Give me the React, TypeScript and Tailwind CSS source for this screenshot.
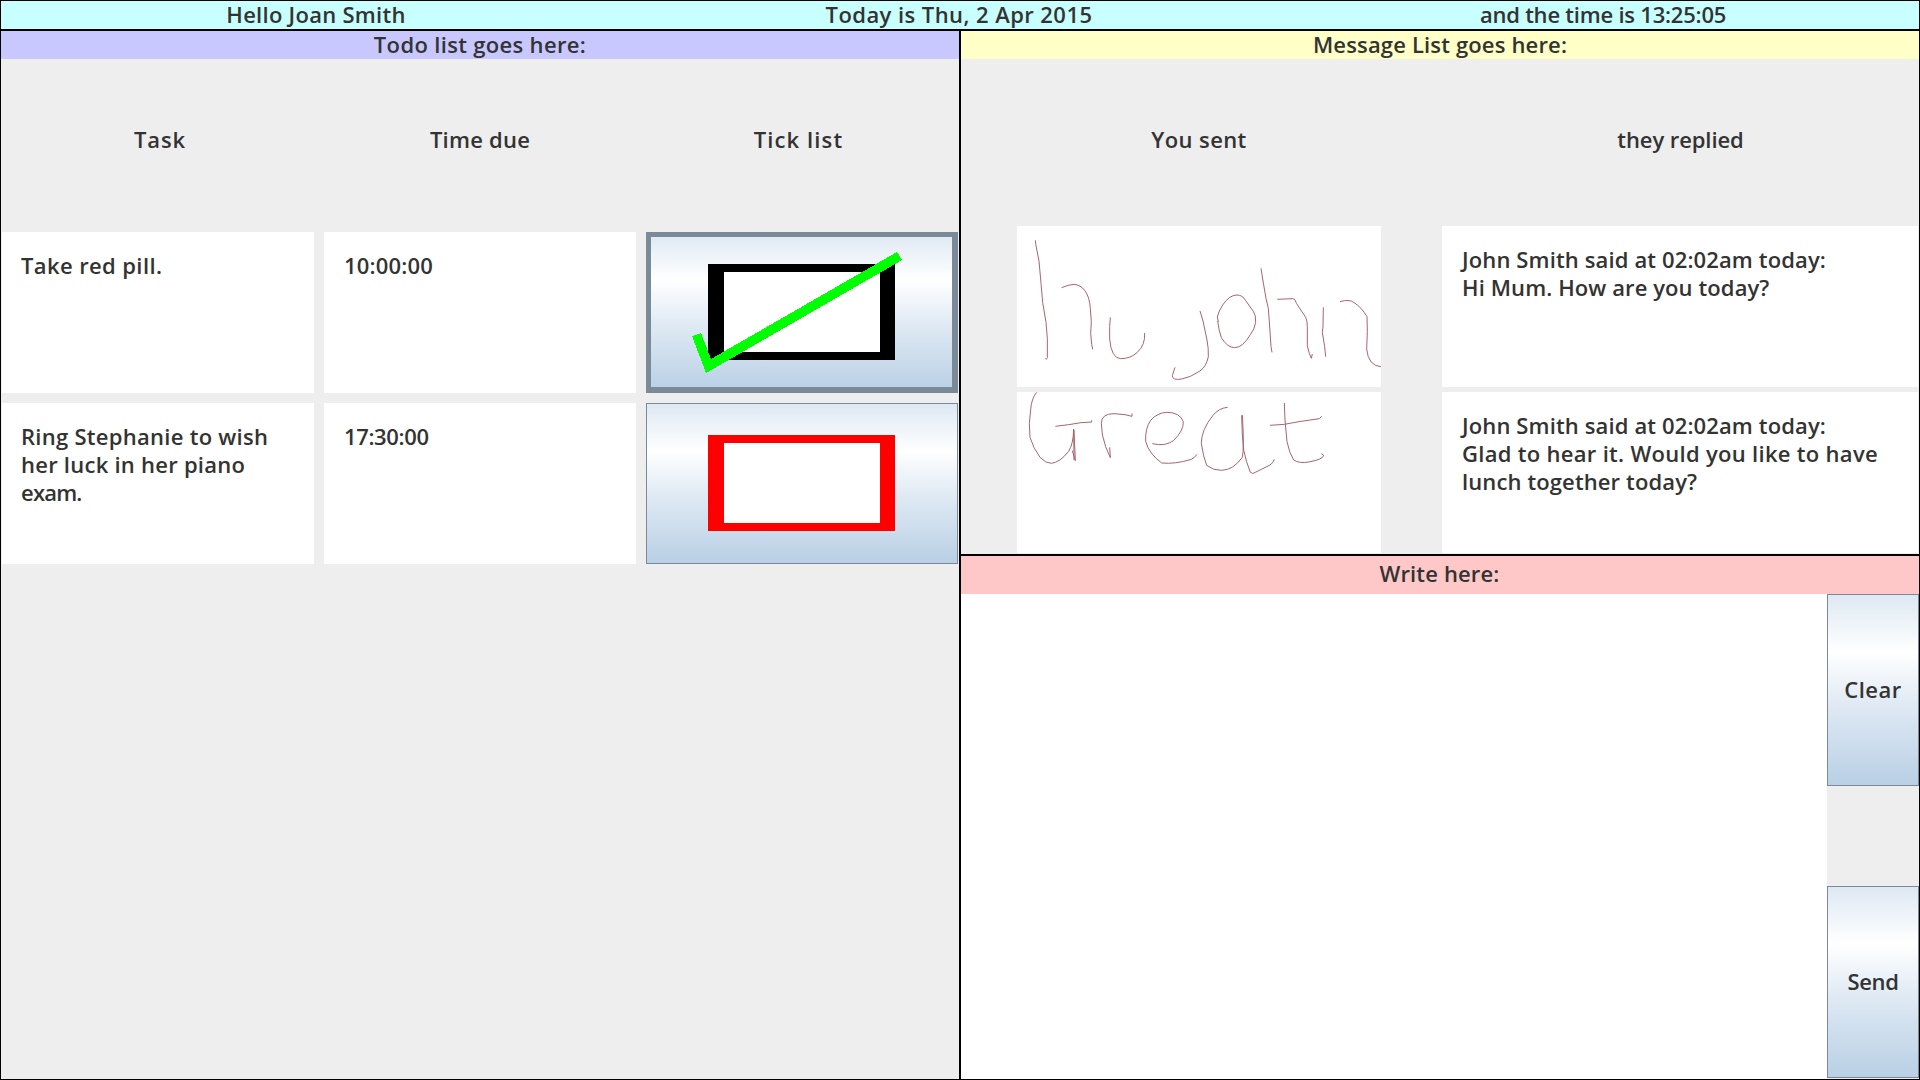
import React from 'react';

const GRADIENT =
  'bg-[linear-gradient(to_bottom,#dde8f3_0%,#ffffff_30%,#dde8f3_60%,#b8cfe5_100%)] bg-origin-border';

type Todo = { lines: { text: string; tracking: string }[]; due: string; dueTracking: string; done: boolean };

const TODOS: Todo[] = [
  {
    lines: [{ text: 'Take red pill.', tracking: 'tracking-[0.39px]' }],
    due: '10:00:00',
    dueTracking: 'tracking-[0.2px]',
    done: true,
  },
  {
    lines: [
      { text: 'Ring Stephanie to wish', tracking: 'tracking-[0.28px]' },
      { text: 'her luck in her piano', tracking: 'tracking-[0.25px]' },
      { text: 'exam.', tracking: 'tracking-[-0.8px]' },
    ],
    due: '17:30:00',
    dueTracking: 'tracking-[-0.36px]',
    done: false,
  },
];

const HI_JOHN = [
  'M106 76 L108 92 L117 138 L123 205 L128 262 L138 322 L142 370 L142 428 L139 433 L136 430',
  'M185 218 Q205 209 222 208 Q242 210 254 226 Q269 246 271 280 L274 320 L272 355 L275 388 L278 403',
  'M331 307 L329 335 L329 372 Q334 430 362 431 Q392 431 412 412 Q436 390 434 354',
  'M600 288 L609 318 L621 375 Q626 400 625 425 Q619 455 600 468 Q570 488 545 492 Q517 497 517 482 L525 457',
  'M655 320 L652 306 Q656 288 668 270 Q688 240 711 240 Q728 240 737 257 L760 289 Q768 300 767 322 Q764 343 751 359 Q728 398 704 398 Q682 398 664 368 Q656 345 653 318',
  'M783 160 L789 198 L798 250 L805 280 L810 350 L813 395 L816 412',
  'M832 253 L878 251 L884 253 L890 266 L917 307 Q922 317 922 335 L922 392 Q928 420 934 430 L937 417',
  'M970 277 L969 335 L967 352 L974 395 L977 425',
  'M1020 260 Q1048 252 1061 262 Q1085 277 1101 305 L1102 350 L1100 402 Q1105 453 1143 455',
];

const GREAT = [
  'M110 37 Q94 56 92 90 L88 130 L90 172 Q100 205 120 232 Q137 250 154 250 Q180 247 206 214 Q220 192 221 147 L222 240',
  'M217 212 L226 242 L222 150',
  'M166 139 L206 134 L243 128 L275 126 L275 121',
  'M396 100 L396 109 L375 104 L342 101 Q304 101 304 130 Q304 165 317 200 L331 233 L329 202',
  'M457 191 Q497 200 520 182 Q551 153 550 125 Q540 97 500 97 Q472 98 452 121 Q435 145 437 184 Q446 220 485 249 Q525 253 574 238 Q583 234 591 223',
  'M683 82 Q657 84 639 106 Q604 149 604 190 Q610 232 620 256 Q640 272 665 271 Q700 270 727 232 Q733 205 727 105',
  'M725 106 L727 165 L731 210 Q738 245 751 277 Q759 284 766 277 L810 255 Q820 249 823 238',
  'M853 69 L855 120 L861 185 Q868 220 881 240 Q898 251 926 246 Q970 238 971 226 L964 221',
  'M810 136 L853 133 L897 125 L958 116 L965 109',
];

function Ink({ strokes, viewBox }: { strokes: string[]; viewBox: string }) {
  return (
    <div className="h-[161px] w-[364px] bg-white">
      <svg
        viewBox={viewBox}
        className="block h-full w-full"
        fill="none"
        stroke="#a8646e"
        strokeWidth="3"
        strokeLinejoin="round"
      >
        {strokes.map((d) => (
          <path key={d} d={d} />
        ))}
      </svg>
    </div>
  );
}

function TickButton({ done }: { done: boolean }) {
  return (
    <button
      className={`relative h-[161px] w-[312px] border-[#7a8a99] ${GRADIENT} ${
        done ? 'border-t-[5px] border-r-[6px] border-b-[6px] border-l-[5px]' : 'border'
      }`}
    >
      <svg
        viewBox="0 0 312 161"
        className={`absolute h-[161px] w-[312px] ${done ? '-top-[5px] -left-[5px]' : '-top-px -left-px'}`}
        shapeRendering="crispEdges"
      >
        <rect x="62" y="32" width="187" height="96" fill={done ? '#000000' : '#ff0000'} />
        <rect x="78" y="40" width="156" height="80" fill="#ffffff" />
        {done && <path d="M46 104 L55 101 L65 127 L251 20 L256 28 L60 141 Z" fill="#00ff00" />}
      </svg>
    </button>
  );
}

function ColumnTitle({ className, children }: { className: string; children: React.ReactNode }) {
  return <div className={`flex h-[161px] items-center justify-center ${className}`}>{children}</div>;
}

function ReplyCard({ children }: { children: React.ReactNode }) {
  return <div className="h-[161px] w-[476px] bg-white px-[20px] pt-[19px] whitespace-nowrap">{children}</div>;
}

export default function App() {
  return (
    <div className="flex h-[1080px] w-[1920px] flex-col overflow-hidden border border-black bg-[#eeeeee] font-['Open_Sans',sans-serif] text-[22px] leading-[28px] font-semibold text-[#333333]">
      <header className="grid h-[28px] shrink-0 grid-cols-[630px_656px_632px] bg-[#c8ffff] text-center leading-[26px]">
        <div className="tracking-[0.27px]">Hello Joan Smith</div>
        <div className="tracking-[0.43px]">Today is Thu, 2 Apr 2015</div>
        <div className="tracking-[-0.22px]">and the time is 13:25:05</div>
      </header>

      <main className="flex min-h-0 flex-1 border-t-2 border-black">
        <section className="w-[958px] shrink-0">
          <h2 className="h-[28px] bg-[#c8c8ff] text-center leading-[26px] tracking-[0.33px]">Todo list goes here:</h2>
          <div className="grid grid-cols-[312px_312px_312px] gap-[10px] pt-[2px] pl-px">
            <ColumnTitle className="pb-[5px] pl-[4px] tracking-[0.83px]">Task</ColumnTitle>
            <ColumnTitle className="pb-[5px] tracking-[0.24px]">Time due</ColumnTitle>
            <ColumnTitle className="pr-[7px] pb-[5px] tracking-[1.1px]">Tick list</ColumnTitle>
            {TODOS.map((todo) => (
              <React.Fragment key={todo.due}>
                <div className="h-[161px] bg-white px-[19px] pt-[19px] whitespace-nowrap">
                  {todo.lines.map((line) => (
                    <div key={line.text} className={line.tracking}>
                      {line.text}
                    </div>
                  ))}
                </div>
                <div className={`h-[161px] bg-white px-[20px] pt-[19px] ${todo.dueTracking}`}>{todo.due}</div>
                <TickButton done={todo.done} />
              </React.Fragment>
            ))}
          </div>
        </section>

        <section className="flex flex-1 flex-col border-l-2 border-black">
          <h2 className="h-[28px] shrink-0 bg-[#ffffc8] text-center leading-[26px] tracking-[0.16px]">
            Message List goes here:
          </h2>
          <div className="grid h-[495px] shrink-0 grid-cols-[364px_476px] content-start gap-x-[61px] gap-y-[5px] pt-px pl-[56px]">
            <ColumnTitle className="pb-[4px] tracking-[0.4px]">You sent</ColumnTitle>
            <ColumnTitle className="pb-[4px] pl-px tracking-[-0.08px]">they replied</ColumnTitle>
            <Ink strokes={HI_JOHN} viewBox="51 33 1092 483" />
            <ReplyCard>
              <div className="tracking-[0.13px]">John Smith said at 02:02am today:</div>
              <div className="tracking-[0.1px]">Hi Mum. How are you today?</div>
            </ReplyCard>
            <Ink strokes={GREAT} viewBox="51 36 1092 483" />
            <ReplyCard>
              <div className="tracking-[0.13px]">John Smith said at 02:02am today:</div>
              <div className="tracking-[0.3px]">Glad to hear it. Would you like to have</div>
              <div className="tracking-[0.12px]">lunch together today?</div>
            </ReplyCard>
          </div>

          <h2 className="h-[40px] shrink-0 border-t-2 border-black bg-[#ffc8c8] pr-px text-center leading-[35px] tracking-[0.16px]">
            Write here:
          </h2>
          <div className="flex min-h-0 flex-1">
            <div className="w-[866px] bg-white" />
            <div className="flex w-[92px] flex-col justify-between pb-px">
              <button className={`h-[192px] border border-[#7a8a99] pb-[2px] tracking-[0.5px] ${GRADIENT}`}>Clear</button>
              <button className={`h-[192px] border border-[#7a8a99] pb-[2px] tracking-[-0.3px] ${GRADIENT}`}>Send</button>
            </div>
          </div>
        </section>
      </main>
    </div>
  );
}
